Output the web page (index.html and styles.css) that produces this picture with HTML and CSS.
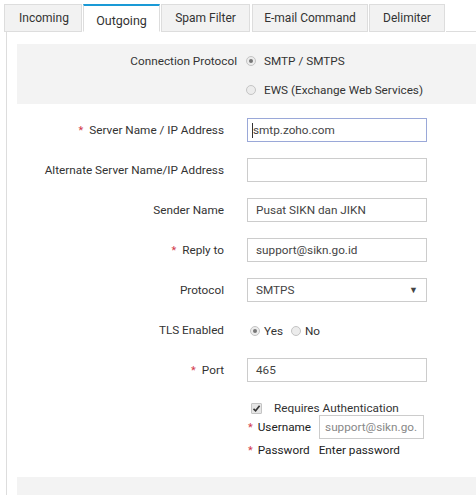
FILE: index.html
```html
<!DOCTYPE html>
<html>
<head>
<meta charset="utf-8">
<link rel="stylesheet" href="styles.css">
</head>
<body>
<div class="tabs">
  <div class="tab t1">Incoming</div>
  <div class="tab t2 active">Outgoing</div>
  <div class="tab t3">Spam Filter</div>
  <div class="tab t4">E-mail Command</div>
  <div class="tab t5">Delimiter</div>
  <div class="tab-fill"></div>
</div>
<div class="content">
  <div class="proto-box">
    <div class="proto-label">Connection Protocol</div>
    <div class="proto-options">
      <div class="opt"><span class="radio checked"></span>SMTP / SMTPS</div>
      <div class="opt"><span class="radio"></span>EWS (Exchange Web Services)</div>
    </div>
  </div>
  <div class="form">
    <div class="row"><div class="label"><span class="req">*</span>Server Name / IP Address</div><div class="input focus"><span class="caret"></span>smtp.zoho.com</div></div>
    <div class="row"><div class="label">Alternate Server Name/IP Address</div><div class="input"></div></div>
    <div class="row"><div class="label">Sender Name</div><div class="input">Pusat SIKN dan JIKN</div></div>
    <div class="row"><div class="label"><span class="req">*</span>Reply to</div><div class="input">support@sikn.go.id</div></div>
    <div class="row"><div class="label">Protocol</div><div class="input select"><span>SMTPS</span><span class="arrow">&#9660;</span></div></div>
    <div class="row"><div class="label">TLS Enabled</div><div class="tls"><span class="radio checked"></span>Yes<span class="radio r2"></span>No</div></div>
    <div class="row"><div class="label"><span class="req">*</span>Port</div><div class="input">465</div></div>
  </div>
  <div class="auth">
    <div class="auth-check"><span class="checkbox"><svg width="9" height="9" viewBox="0 0 9 9"><path d="M1.5 4.8 L3.6 6.8 L7.6 1.8" fill="none" stroke="#333" stroke-width="1.6"/></svg></span>Requires Authentication</div>
    <div class="auth-row"><span class="req">*</span><span class="auth-label">Username</span><div class="input small">support@sikn.go.</div></div>
    <div class="auth-row pw"><span class="req">*</span><span class="auth-label">Password</span><span class="pw-text">Enter password</span></div>
  </div>
  <div class="footer"></div>
</div>
</body>
</html>
```
FILE: styles.css
```css
html, body { margin: 0; padding: 0; background: #fff; }
body { font-family: Roboto, "Noto Sans", sans-serif; font-size: 11.75px; color: #333; width: 476px; height: 495px; overflow: hidden; }

.tabs { display: flex; align-items: flex-end; padding-left: 4px; padding-top: 4px; height: 28px; }
.tab { box-sizing: border-box; height: 28px; border: 1px solid #ddd; border-bottom: 1px solid #ddd; background: #f2f2f2; display: flex; align-items: center; justify-content: center; margin-right: 1px; color: #333; font-size: 12px; }
.t1 { width: 78px; padding-left: 2px; }
.t2 { width: 77px; }
.t3 { width: 89px; margin-right: 2px; }
.t4 { width: 116px; }
.t5 { width: 76px; }
.tab.active { background: #fff; border-top: 2px solid #1a9ad6; border-bottom-color: #fff; padding-top: 4px; font-size: 12.5px; }
.tab-fill { flex: 1; height: 28px; border-bottom: 1px solid #ddd; box-sizing: border-box; }

.content { margin-left: 6px; border-left: 1px solid #ddd; height: 463px; padding-left: 10px; padding-top: 12px; box-sizing: border-box; }

.proto-box { background: #f3f3f3; height: 60px; display: flex; box-sizing: border-box; padding-top: 10px; }
.proto-label { width: 220px; text-align: right; line-height: 14px; }
.proto-options { margin-left: 9px; display: flex; flex-direction: column; gap: 15px; }
.opt { display: flex; align-items: center; height: 14px; }
.opt .radio { margin-right: 8px; }

.radio { display: inline-block; box-sizing: border-box; width: 10px; height: 10px; border-radius: 50%; border: 1px solid #c4c4c4; background: #ececec; position: relative; }
.radio.checked::after { content: ""; position: absolute; left: 2px; top: 2px; width: 4px; height: 4px; border-radius: 50%; background: #777; }

.form { margin-top: 6px; }
.row { display: flex; align-items: center; height: 40px; }
.label { width: 207px; text-align: right; }
.req { color: #d2384a; margin-right: 6px; font-size: 11px; }
.input { box-sizing: border-box; margin-left: 23px; width: 180px; height: 24px; border: 1px solid #ccc; display: flex; align-items: center; padding-left: 8px; color: #444; background: #fff; }
.input.focus { border-color: #9aa8d8; padding-left: 4px; }
.caret { display: inline-block; width: 1px; height: 15px; background: #333; margin-right: 0; }
.select { justify-content: space-between; padding-left: 8px; padding-right: 8px; }
.arrow { font-size: 9px; color: #444; }
.tls { margin-left: 26px; display: flex; align-items: center; margin-top: 2px; }
.tls .radio { margin-right: 4px; }
.tls .r2 { margin-left: 8px; }

.auth { margin-left: 231px; margin-top: 11px; }
.auth-check { display: flex; align-items: center; height: 14px; padding-left: 3px; }
.checkbox { box-sizing: border-box; width: 11px; height: 11px; border: 1px solid #c4c4c4; background: #e6e6e6; display: inline-flex; align-items: center; justify-content: center; margin-right: 12px; border-radius: 1px; }
.auth-row { display: flex; align-items: center; height: 24px; margin-top: 0; }
.auth-row .req { margin-left: 0; margin-right: 5px; }
.auth-label { color: #222; }
.auth-row .input.small { margin-left: 8px; width: 105px; padding-left: 5px; color: #888; font-size: 11.75px; }
.auth-row.pw { margin-top: -1px; }
.pw-text { margin-left: 9px; color: #222; }

.footer { margin-top: 15px; background: #f3f3f3; height: 30px; }
```
